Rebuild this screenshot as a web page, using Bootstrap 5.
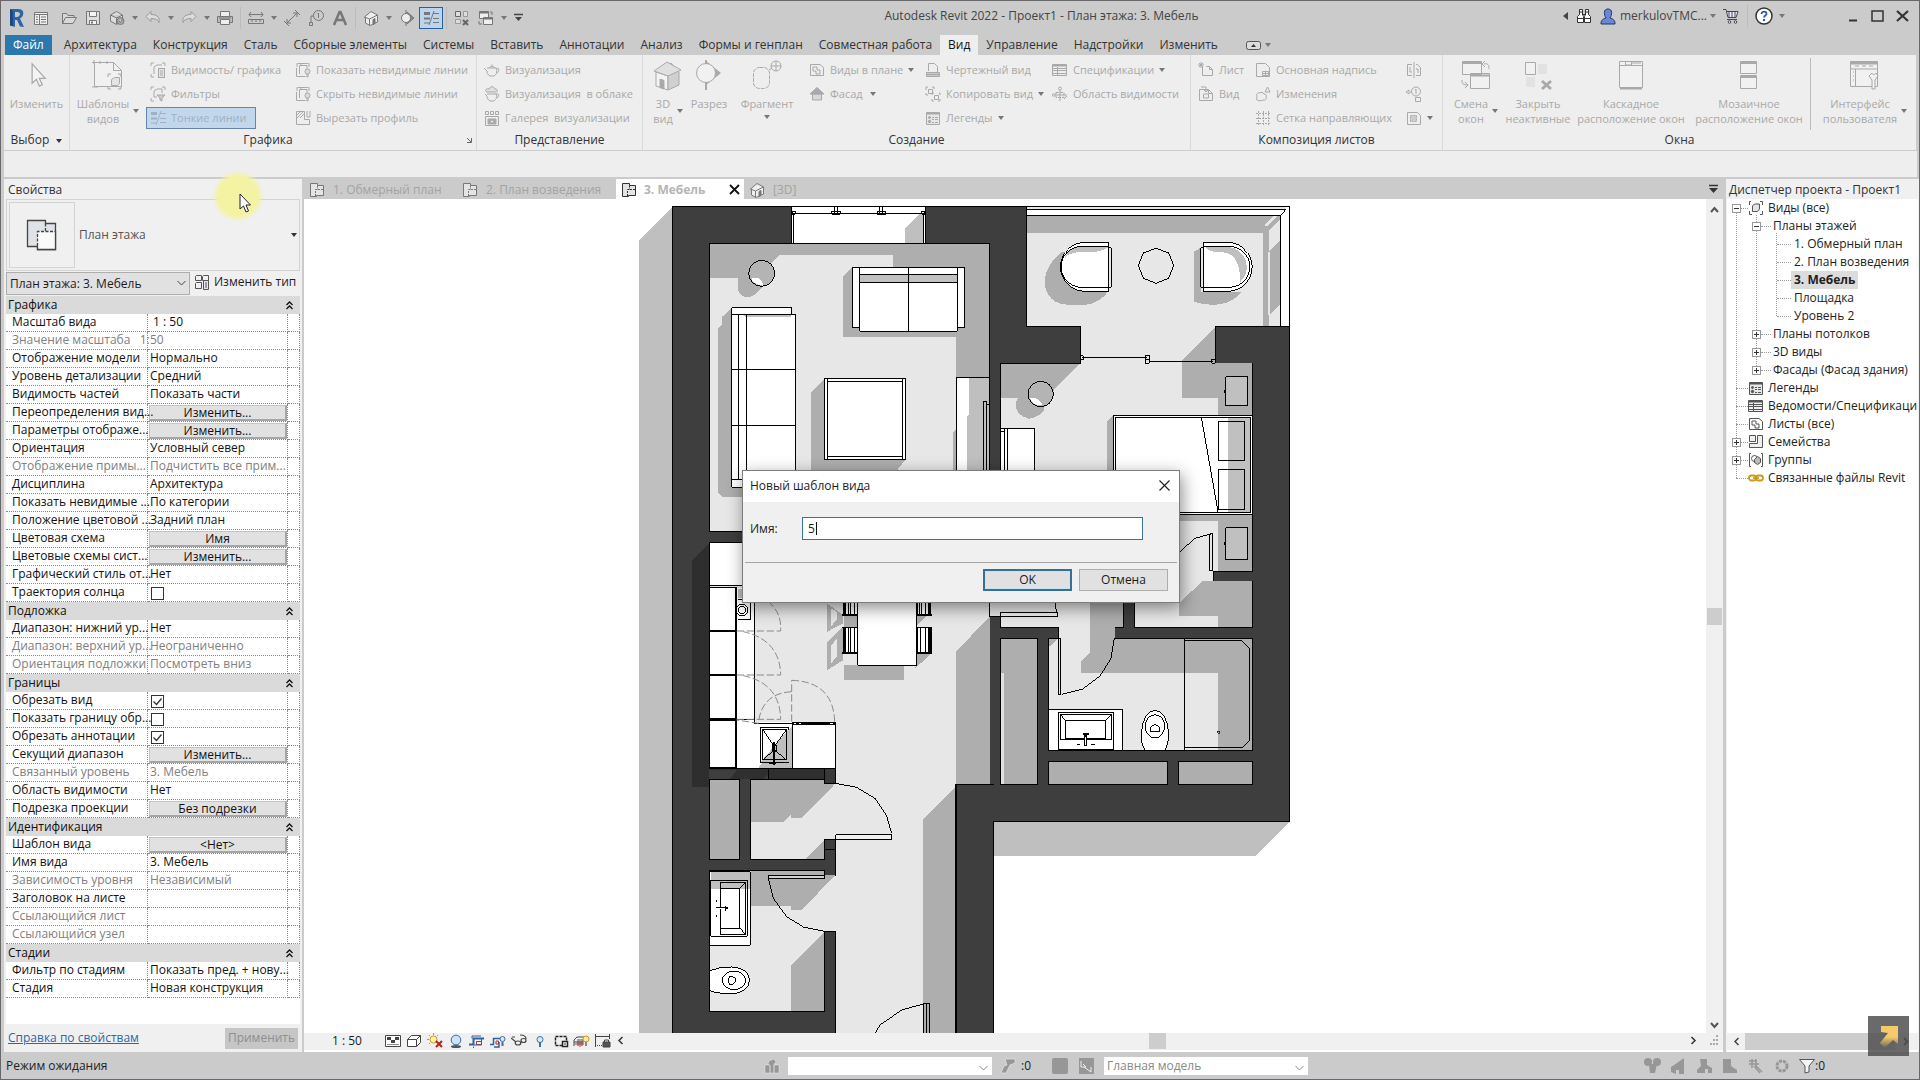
<!DOCTYPE html>
<html lang="ru">
<head>
<meta charset="utf-8">
<meta name="viewport" content="width=device-width, initial-scale=1">
<title>Autodesk Revit 2022 - Проект1 - План этажа: 3. Мебель</title>
<link href="https://cdn.jsdelivr.net/npm/bootstrap@5.3.0/dist/css/bootstrap.min.css" rel="stylesheet">
<style>
:root{--chrome:#cbcbcb;--panel:#eeeeee;--dim:#a9a9a9}
body{font:12px/18px "Open Sans","Noto Sans",sans-serif;color:#1c1c1c;background:var(--chrome);overflow:hidden}
button,select,input{font:inherit;color:inherit}
svg{display:block;flex:none}
.app-frame{border:1px solid #68686a;background:var(--chrome)}
.plain-btn{border:0;background:none;padding:0}
.title-row{height:34px}
.qa-btn{width:24px;height:22px;display:flex;align-items:center;justify-content:center;color:#777}
.qa-caret{width:12px;display:flex;justify-content:center;color:#555}
.qa-on{border:1px solid #2b5f9b;background:#bcd4ee}
.v-sep{width:1px;height:22px;margin:0 3px;background:#bcbcbc}
.app-title{color:#444}
.win-btn{width:25px;height:24px;display:flex;align-items:center;justify-content:center;color:#333}
.tab-row{height:20px;padding-left:4px}
.rb-tab{padding:0 8px;line-height:20px;color:#333;text-decoration:none;white-space:nowrap}
.rb-tab-file{background:#2b78ae;color:#fff;margin-right:4px}
.rb-tab-on{background:var(--panel);color:#111}
.ribbon{height:96px;margin:0 3px;background:var(--panel);border-bottom:1px solid #cdcdcd}
.rb-panel{border-right:1px solid #dadada}
.rb-body{height:75px;padding-top:3px;font-size:11px}
.rb-title{height:20px;line-height:20px;color:#333}
.rb-small{height:22px;margin:1px 0 2px;padding:0 3px;border:1px solid transparent;background:none;display:flex;align-items:center;gap:5px;color:var(--dim);white-space:nowrap;text-align:left}
.rb-small.is-on{border-color:#6585ad;background:#c3d7ec;color:#9fb0c4;padding-right:8px}
.rb-big{flex:none;border:0;background:none;padding:0;color:var(--dim);line-height:15px;display:flex;flex-direction:column;align-items:center;gap:5px;padding-top:2px;white-space:nowrap}
.caret-dn{border:3px solid transparent;border-top:4px solid #777;border-bottom:0;width:0;height:0;display:inline-block;flex:none}
.caret-dk{border-top-color:#333}
.options-bar{height:26px;margin:0 2px 0 3px;background:var(--panel)}
.work-row{border-top:2px solid var(--chrome);padding-left:3px;background:var(--chrome)}
.props{width:298px;background:#f0f0f0;padding:0 2px}
.pal-head{height:20px;line-height:22px;padding-left:2px;color:#333}
.type-box{height:72px;border:1px solid #d3d3d3;padding:2px}
.type-pic{width:66px;height:66px;border:1px solid #d3d3d3}
.sel-row{height:25px;padding-top:1px}
.inst-select{width:184px;height:23px;border:1px solid #adadad;background:#e1e1e1;padding:0 3px;appearance:none;border-radius:0}
.sel-wrap{position:relative}
.sel-wrap svg{position:absolute;right:4px;top:8px;pointer-events:none}
.props-table{width:294px;table-layout:fixed;border-collapse:separate;border-spacing:0;color:#111}
.props-table th,.props-table td{height:18px;padding:0;line-height:16px;font-weight:400;white-space:nowrap;border-bottom:1px dotted #8a8a8a;border-right:1px dotted #8a8a8a;vertical-align:top}
.props-table tbody th{padding-left:6px}
.props-table td{padding-left:2px}
.props-table .grp th{background:#dadada;border:0;padding:0 7px 0 2px;line-height:18px}
.props-table .off th,.props-table .off td{color:#808080}
.props-table .ctl{padding:1px 0 0 1px}
.cell-btn{display:block;width:138px;height:16px;padding:0;line-height:13px;border:1px solid #c4c4c4;border-right:2px solid #a5a5a5;border-bottom:2px solid #a5a5a5;background:#e1e1e1;text-align:center}
.tick{appearance:none;display:block;width:13px;height:13px;margin:2px 0 0 2px;border:1px solid #333;background:#fff}
.tick:checked{background:#fff url("data:image/svg+xml,%3Csvg xmlns='http://www.w3.org/2000/svg' viewBox='0 0 11 11'%3E%3Cpath d='M1.5 5.5l3 3 5-6' fill='none' stroke='%23333' stroke-width='1.3'/%3E%3C/svg%3E")}
.props-foot{height:28px;padding:0 2px}
.props-foot a{color:#2a68a8}
.apply-btn{width:73px;height:21px;border:0;background:#c6c6c6;color:#8f8f8f;padding:0;line-height:20px}
.canvas-col{margin-left:2px;min-width:0}
.doc-tabs{height:20px}
.doc-tab{border:0;background:none;height:20px;padding:1px 0 0 5px;display:flex;align-items:center;gap:8px;color:#a3a3a3;text-align:left;white-space:nowrap}
.doc-tab-on{background:#fff;font-weight:700;color:#b5b5b5;width:128px;padding-right:4px;gap:7px}
.canvas{background:#fff;min-height:0}
.plan-svg{width:0;flex:1 1 0;height:100%}
.vscroll{width:17px;background:#f0f0f0;color:#555}
.thumb-v{width:15px;height:17px;background:#cdcdcd}
.view-bar{height:19px;background:#f0f0f0;border-bottom:2px solid #fff;padding:0 0 2px 28px}
.vb-btn{width:21px;display:flex;justify-content:center}
.hthumb{width:17px;height:16px;background:#cdcdcd}
.browser-pal{width:193px;margin-left:3px;background:#f0f0f0;padding:0 1px}
.tree-box{background:#fff;overflow:hidden;min-height:0}
.tree-box ul{list-style:none;margin:0;padding:0;position:relative}
.tree-box ul::before{content:"";position:absolute;left:9px;top:9px;bottom:9px;border-left:1px dotted #9a9a9a}
.tree-box ul ul::before{left:29px;top:-2px}
.tree-box ul ul ul::before{left:49px}
.t-row{height:18px;display:flex;align-items:center;white-space:nowrap;padding-left:5px;position:relative;color:#222}
ul ul .t-row{padding-left:25px}
ul ul ul .t-row{padding-left:50px}
.t-exp{width:9px;height:9px;border:1px solid #989898;background:#fff;padding:0;position:relative;flex:none}
.t-exp::before{content:"";position:absolute;left:1px;right:1px;top:3px;height:1px;background:#333}
.t-exp.plus::after{content:"";position:absolute;top:1px;bottom:1px;left:3px;width:1px;background:#333}
.t-dots{width:7px;border-top:1px dotted #9a9a9a;flex:none}
.t-d10{width:10px;margin-right:2px}
.t-d12{width:12px;margin-left:4px}
.t-d14{width:14px}
.t-row svg{margin-right:4px}
.t-leaf{padding:0 3px}
.t-sel{background:#dcdcdc;font-weight:700}
.hs-row{height:19px;border-bottom:2px solid #fff;background:#f0f0f0;color:#444}
.hs-bar{height:17px;background:#cdcdcd}
.status-row{height:27px;background:var(--chrome);padding-left:5px;color:#222}
.st-select{height:18px;border:0;background:#fff;color:#888;appearance:none;padding:0 3px;width:204px;border-radius:0}
.st-icon{color:#979797}
.dlg{position:absolute;left:50%;top:469px;transform:translateX(-50%);width:438px;margin-left:1px;border:1px solid #7d7d7d;background:#f0f0f0;box-shadow:2px 5px 16px rgba(0,0,0,.45);z-index:5}
.dlg-head{height:31px;background:#fff;padding:0 7px 2px}
.dlg-body{padding:15px 36px 22px 7px}
.dlg-input{height:23px;border:1px solid #3b7398;background:linear-gradient(#111,#111) 13px 4px/1px 13px no-repeat #fff;padding:0 5px;border-radius:0;outline:0;caret-color:transparent}
.dlg-label{width:52px}
.dlg-foot{border-top:1px solid #a5a5a5;margin:0 2px;padding:6px 9px 11px;gap:7px}
.dlg-btn{width:89px;height:22px;border:1px solid #adadad;background:#e1e1e1;line-height:18px;padding:0}
.dlg-ok{border:2px solid #36709a;line-height:16px;box-shadow:inset 0 0 0 1px #c4e4f4}
.halo{position:absolute;left:211px;top:169px;width:52px;height:52px;border-radius:50%;background:radial-gradient(closest-side,#f4f3a3 75%,rgba(244,243,163,0));z-index:6}
.pointer{position:absolute;left:238px;top:192px;z-index:7}
.corner-mark{position:absolute;right:10px;bottom:23px;width:41px;height:40px;background:rgba(80,80,80,.85);z-index:6;display:flex;align-items:center;justify-content:center}
</style>
<script src="https://cdn.jsdelivr.net/npm/bootstrap@5.3.0/dist/js/bootstrap.bundle.min.js"></script>
</head>
<body>
<svg width="0" height="0" class="position-absolute" aria-hidden="true">
<defs>
<g id="sheetpair" fill="none" stroke="currentColor"><path d="M1.500 1.500h7v2h6v10h-7v1h-6z" fill="#e4e4e4"/><path d="M8.500 3.500v4M6.500 14v-6.500h8" stroke-dasharray="2 1"/></g>
<g id="house" stroke="currentColor" fill="#eee"><path d="M1.500 7L8 1.500 14.500 5v7L7 15.500l-4.500-2.500V8z"/><path d="M1.500 7l5 2 8-4M6.500 9v6" fill="none"/><path d="M10 9.500l2-1v5l-2 1z" fill="currentColor"/></g>
<g id="lines" fill="currentColor" stroke="none"><path d="M1 2h6v3H1zM1 7.500h6v2H1zM1 12.500h6v1H1zM10 3h6v1h-6zM10 8h6v1h-6zM10 12h6v1h-6z"/><path d="M6 15L11 1" stroke="currentColor" fill="none"/></g>
<g id="visgraph" fill="none" stroke="currentColor"><path d="M1 4V1h3M12 1h3v3M1 12v3h3" /><path d="M4 12V5l3-2h5"/><rect x="8.500" y="6.500" width="6" height="9" fill="#e4e4e4"/><path d="M10 9h3M10 11h3M10 13h3"/></g>
<g id="filt" fill="none" stroke="currentColor"><path d="M1 4V1h3M12 1h3v3M1 12v3h3M4 11V5l3-2h5v4M4 11h3"/><path d="M7 9h8l-3 3v3l-2-1v-2z" fill="#ccc"/></g>
<g id="hid" fill="none" stroke="currentColor"><path d="M4.500 12V3.500H12V12M1.500 6v8.500h9" /><path d="M2 1v4M6 1v2M14 1v4M3 1.500h10"/><circle cx="12.500" cy="9.500" r="2.500" fill="#ddd"/><path d="M12 12v3h1v-3"/></g>
<g id="cutp" fill="none" stroke="currentColor"><path d="M1.500 1.500h8v8h5v5h-13z"/><path d="M2 8l6-6M2 5l3-3M5 8l4-4M12 1v6h3V1"/></g>
<g id="teapot" fill="none" stroke="currentColor"><path d="M3 6h9c2 4 0 7-2 8H6C4 13 3 11 3 9L0 6M12 7c3-2 4 1 1 4M5 6c1-2 5-2 6 0M8 4V2.500"/></g>
<g id="teacloud" fill="none" stroke="currentColor"><path d="M3 8h9c2 3 0 5-2 7H6C4 14 3 12 3 10L1 8M12 8c4-1 3 3 1 4"/><path d="M3 6C0 5 2 2 5 3c1-3 5-3 6 0 3 0 3 3 1 3z" fill="#e0e0e0"/></g>
<g id="gall" fill="none" stroke="currentColor"><path d="M1.500 1.500h3v3h-3zM6.500 1.500h3v3h-3zM11.500 1.500h3v3h-3zM1.500 6.500h13v9h-13z"/><path d="M4 9h8v5H4z" fill="currentColor"/><circle cx="8" cy="11.500" r="1.500" fill="#eee"/></g>
<g id="planv" fill="none" stroke="currentColor"><path d="M1.500 2.500H11l3.500 3v8h-13z"/><path d="M4 5h4v3h3v4H7V9H4z"/></g>
<g id="facade" fill="#d8d8d8" stroke="currentColor"><path d="M3.500 8h9v6h-9z"/><path d="M8 1.500L15 8H1z" fill="currentColor"/></g>
<g id="draft" fill="none" stroke="currentColor"><path d="M3.500 9V1.500h6l3 3V10M1.500 10.500h13v4h-13z"/><path d="M2 12.500h12" stroke-width="2"/></g>
<g id="dup" fill="none" stroke="currentColor"><path d="M1 4V1h2M7 1h2v2M1 7v2h2M3.500 3.500h4v4h-4zM7 9V7h2M14 7h1v2M7 13v2h2M15 13v2h-2M9.500 9.500h4v4h-4z"/></g>
<g id="legend" fill="none" stroke="currentColor"><path d="M1.500 2.500h13v12h-13z" fill="#e8e8e8"/><path d="M2 3.500h12" stroke-width="2"/><circle cx="4.500" cy="7.500" r="1" fill="currentColor"/><circle cx="4.500" cy="11.500" r="1.200" fill="currentColor"/><path d="M7 7.500h2M10 7.500h3M7 9.500h2M10 9.500h3M7 12.500h2M10 12.500h3"/></g>
<g id="sched" fill="none" stroke="currentColor"><path d="M.5 2.500h14v11H.5z" fill="#eee"/><path d="M1 3.500h13" stroke-width="2"/><path d="M.5 6.500h14M.5 8.500h14M.5 11.500h14M5.500 5v9"/></g>
<g id="scope" fill="none" stroke="currentColor"><path d="M4 6.500h8v5H4z" stroke-dasharray="3 1"/><circle cx="8" cy="2.500" r="1.500"/><circle cx="1.800" cy="9" r="1.300"/><path d="M8 4v11M3 9h12M12 13l3-3"/></g>
<g id="sheetn" fill="none" stroke="currentColor"><path d="M4.500 4.500v9h10v-6l-3-3h-3M11.500 4.500v3h3"/><path d="M3 0v6M0 3h6M1 1l4 4M5 1L1 5"/></g>
<g id="sheetv" fill="none" stroke="currentColor"><path d="M1.500 3.500h9l4 4v7h-13zM10.500 3.500v4h4"/><path d="M3 1h5v4M6 4l2 2 2-2M5.500 8h5v4h-5z"/></g>
<g id="tblock" fill="none" stroke="currentColor"><path d="M1.500 1.500h9l4 4v9h-13z"/><path d="M7.500 9.500h6v4h-6zM7.500 11.500h6M10.500 9.500v4"/></g>
<g id="revis" fill="none" stroke="currentColor"><path d="M2 14c-1-2 0-2 0-4-1-2 1-4 3-3 1-1 3-1 4 1 2 0 3 2 2 3 1 2-1 4-3 3-2 1-4 1-6 0zM12.500 1l2.500 5h-5z"/></g>
<g id="guide" fill="none" stroke="currentColor" stroke-dasharray="2 1"><path d="M1 3.500h15M1 8.500h15M1 13.500h15M3.500 1v15M8.500 1v15M13.500 1v15"/></g>
<g id="matchl" fill="none" stroke="currentColor"><path d="M6 2.500H1.500v11H6M10 13.500h4.500v-8l-3-3H10M8 0v16M4 5v5h2M10 7h2v4"/></g>
<g id="vref" fill="none" stroke="currentColor"><circle cx="10" cy="5.500" r="4.500"/><path d="M9 4l1-1v5M0 6l3-2v4zM4 6h2M9.500 11.500h5v4h-5z"/></g>
<g id="vport" fill="none" stroke="currentColor"><path d="M1.500 2.500h10l3 3v9h-13z"/><path d="M4.500 5.500h6v6h-6z" fill="#ccc" stroke-dasharray="2 1"/></g>
<g id="shaft" fill="none" stroke="currentColor"><path d="M3 1.500H1.500V5M12 1.500h2.500V5M1.500 11v3.500H4M14.500 11v3.500H12"/><path d="M4.500 6l2-2h5v5l-2 2.500h-5z" fill="#e4e4e4"/></g>
</defs>
</svg>

<div class="app-frame vh-100 d-flex flex-column position-relative">
<header>
<div class="title-row d-flex align-items-center">
  <div class="d-flex align-items-center ps-1">
    <button class="plain-btn qa-btn" aria-label="Revit"><svg width="16" height="20" viewBox="0 0 16 20"><path d="M1 1h8c5 0 6 3 5 6-.5 2-2 3-3 3.500L15 19l-4-.5L8 12H6v7l-5-1.500z" fill="#2d66a8"/><path d="M6 4h2.500c2 0 2.500 1 2.300 2.500C10.500 8 9.500 9 8 9H6z" fill="#cbcbcb"/><path d="M1 1l3 2v15l-3-.5z" fill="#1a4a85"/></svg></button>
    <button class="plain-btn qa-btn me-1" aria-label="Главная"><svg width="16" height="16" fill="none" stroke="currentColor"><path d="M1.500 2.500h13v12h-13z" fill="#eee"/><path d="M1.500 4.500h13M6.500 4v10M2 2.500h12M3 7h2M3 9.500h2M3 12h2M8 7h5M8 9.500h5M8 12h5" /></svg></button>
    <button class="plain-btn qa-btn" aria-label="Открыть"><svg width="16" height="16" fill="#d8d8d8" stroke="currentColor"><path d="M1.500 13.500v-10h4l1.500 2h6v2M1.500 13.500l3-6h11l-3.500 6z"/></svg></button>
    <button class="plain-btn qa-btn" aria-label="Сохранить"><svg width="16" height="16" fill="#ddd" stroke="currentColor"><path d="M1.500 1.500h13v13h-13z"/><path d="M4.500 1.500h7v5h-7zM4.500 10.500h7v4h-7z" fill="#f4f4f4"/><path d="M6 12.500h2" stroke-width="2"/></svg></button>
    <button class="plain-btn qa-btn" aria-label="Синхронизация"><svg width="16" height="16" fill="#ddd" stroke="currentColor"><path d="M1.500 5l6-3.500 6 3.500v6l-6 3.500-6-3.500zM1.500 5l6 3 6-3M7.500 8v6"/><circle cx="11.500" cy="11" r="3.500" fill="#aaa"/><path d="M10 11l1.500 1.500L13.500 9"/></svg></button>
    <span class="qa-caret"><i class="caret-dn"></i></span>
    <button class="plain-btn qa-btn" aria-label="Отменить"><svg width="16" height="16" fill="#ddd" stroke="#999"><path d="M1 6.500l5-5v3c5 0 9 2 8 8-1-3-4-4-8-4v3z"/></svg></button>
    <span class="qa-caret"><i class="caret-dn"></i></span>
    <button class="plain-btn qa-btn" aria-label="Повторить"><svg width="16" height="16" fill="#ddd" stroke="#999"><path d="M15 6.500l-5-5v3c-5 0-9 2-8 8 1-3 4-4 8-4v3z"/></svg></button>
    <span class="qa-caret"><i class="caret-dn"></i></span>
    <button class="plain-btn qa-btn" aria-label="Печать"><svg width="16" height="16" fill="#eee" stroke="currentColor"><path d="M3.500 6V1.500h9V6"/><path d="M.5 6.500h15v6H.5z" fill="#bbb"/><path d="M3.500 9.500h9v5h-9z"/><path d="M2 8h12"/></svg></button>
    <span class="v-sep"></span>
    <button class="plain-btn qa-btn" aria-label="Измерить"><svg width="16" height="16" fill="none" stroke="currentColor"><path d="M1 4.500h14M3 2l-2 2.500L3 7M13 2l2 2.500L13 7M.5 9.500h15v4H.5zM4 10v2M8 10v2M12 10v2"/></svg></button>
    <span class="qa-caret"><i class="caret-dn"></i></span>
    <button class="plain-btn qa-btn" aria-label="Размер"><svg width="16" height="16" fill="none" stroke="currentColor"><path d="M3 13L13 3M3 9v4h4M9 3h4v4M0 11l5 5M11 0l5 5"/></svg></button>
    <button class="plain-btn qa-btn" aria-label="Марка"><svg width="16" height="16" fill="none" stroke="currentColor"><circle cx="10.500" cy="5.500" r="5"/><path d="M9.500 4l1-1v5M6 6H3v6M1.500 12.500h3v3h-3z"/></svg></button>
    <button class="plain-btn qa-btn" aria-label="Текст"><svg width="16" height="16" fill="none" stroke="currentColor" stroke-width="2.500"><path d="M2 15L7.500 2h1L14 15M4.500 10h7"/></svg></button>
    <span class="v-sep"></span>
    <button class="plain-btn qa-btn" aria-label="3D"><svg width="16" height="16"><use href="#house"/></svg></button>
    <span class="qa-caret"><i class="caret-dn"></i></span>
    <button class="plain-btn qa-btn" aria-label="Разрез"><svg width="16" height="16" fill="#eee" stroke="currentColor"><path d="M8 2l7 6-7 6z" fill="#888"/><circle cx="7" cy="8" r="4.500"/><path d="M7 0v3M7 13v3"/></svg></button>
    <button class="plain-btn qa-btn qa-on" aria-label="Тонкие линии"><svg width="16" height="16"><use href="#lines"/></svg></button>
    <span class="v-sep"></span>
    <button class="plain-btn qa-btn" aria-label="Закрыть неактивные"><svg width="16" height="16" fill="#ddd" stroke="#999"><path d="M1.500 1.500h5v5h-5z" stroke="#666"/><path d="M9.500 1.500h4v5h-4zM1.500 9.500h5v4h-5z"/><path d="M9 10l5 5M14 10l-5 5" stroke="#666" stroke-width="2"/></svg></button>
    <button class="plain-btn qa-btn" aria-label="Сменить окно"><svg width="16" height="16" fill="#eee" stroke="currentColor"><path d="M1.500 1.500h9v7h-9zM5.500 7.500h9v7h-9z"/><path d="M5.500 8.500h9M1.500 2.500h9" stroke-width="2"/><path d="M12 2h2v3M1 11v3h3" fill="none"/></svg></button>
    <span class="qa-caret"><i class="caret-dn"></i></span>
    <button class="plain-btn ms-1" aria-label="Настройка панели"><svg width="9" height="10"><path d="M0 1.500h9" stroke="#444" stroke-width="1.500"/><path d="M1 4h7L4.500 8z" fill="#444"/></svg></button>
  </div>
  <div class="app-title flex-grow-1 text-center pb-1">Autodesk Revit 2022 - Проект1 - План этажа: 3. Мебель</div>
  <div class="d-flex align-items-center pe-1 pb-1">
    <span class="qa-caret"><svg width="5" height="8"><path d="M5 0v8L0 4z" fill="#444"/></svg></span>
    <button class="plain-btn qa-btn" aria-label="Поиск"><svg width="16" height="16" fill="#fff" stroke="#333"><path d="M3.500 1.500h3v5l1 2v6h-6v-6l2-2zM9.500 1.500h3v5l2 2v6h-6v-6l1-2z"/><path d="M1.500 10.500h6M8.500 10.500h6M6 6.500h4M3.500 4h3M9.500 4h3"/></svg></button>
    <button class="plain-btn app-title d-flex align-items-center gap-1 ms-1"><svg width="16" height="17"><path d="M8 1c5 0 4 6 2 9 4 1 5 3 5 6H1c0-3 1-5 5-6C4 7 3 1 8 1z" fill="#6b86d6" stroke="#25355f"/></svg>merkulovTMC...</button>
    <span class="qa-caret"><i class="caret-dn"></i></span>
    <button class="plain-btn qa-btn" aria-label="Магазин"><svg width="16" height="16" fill="#eef" stroke="#445"><path d="M0 1.500h3l2 8h8l2-6H4"/><path d="M6 3v6M9 3v6M12 3v6M4 11.500h10" /><circle cx="6.500" cy="14" r="1.300"/><circle cx="12.500" cy="14" r="1.300"/></svg></button>
    <span class="v-sep mx-1"></span>
    <button class="plain-btn qa-btn" aria-label="Справка"><svg width="18" height="18"><circle cx="9" cy="9" r="8" fill="#fff" stroke="#333" stroke-width="1.500"/><path d="M6.500 7c0-3.500 5.500-3 5 0-.3 1.500-2.500 1.500-2.500 3.500" fill="none" stroke="#2d5aa8" stroke-width="1.800"/><circle cx="9" cy="13" r="1.200" fill="#2d5aa8"/></svg></button>
    <span class="qa-caret me-5"><i class="caret-dn"></i></span>
    <button class="plain-btn win-btn ms-1" aria-label="Свернуть"><svg width="12" height="12"><path d="M2 10.500h8" stroke="currentColor" stroke-width="2"/></svg></button>
    <button class="plain-btn win-btn" aria-label="Развернуть"><svg width="13" height="12"><path d="M1 1h11v10H1z" fill="none" stroke="currentColor" stroke-width="1.500"/></svg></button>
    <button class="plain-btn win-btn" aria-label="Закрыть"><svg width="13" height="12"><path d="M1 1l11 10M12 1L1 11" stroke="currentColor" stroke-width="2.200"/></svg></button>
  </div>
</div>
<nav class="tab-row d-flex" aria-label="Лента">
  <a href="#" class="rb-tab rb-tab-file">Файл</a><a href="#" class="rb-tab">Архитектура</a><a href="#" class="rb-tab">Конструкция</a><a href="#" class="rb-tab">Сталь</a><a href="#" class="rb-tab">Сборные элементы</a><a href="#" class="rb-tab">Системы</a><a href="#" class="rb-tab">Вставить</a><a href="#" class="rb-tab">Аннотации</a><a href="#" class="rb-tab">Анализ</a><a href="#" class="rb-tab">Формы и генплан</a><a href="#" class="rb-tab">Совместная работа</a><a href="#" class="rb-tab rb-tab-on">Вид</a><a href="#" class="rb-tab">Управление</a><a href="#" class="rb-tab">Надстройки</a><a href="#" class="rb-tab">Изменить</a>
  <button class="plain-btn d-flex align-items-center ms-3 ps-1 gap-1" aria-label="Свернуть ленту"><svg width="15" height="9"><rect x=".5" y=".5" width="14" height="8" rx="2" fill="#ddd" stroke="#555"/><path d="M5 6l2.500-3L10 6z" fill="#333"/></svg><i class="caret-dn"></i></button>
</nav>
<div class="ribbon d-flex">
  <section class="rb-panel d-flex flex-column" style="width:66px">
    <div class="rb-body d-flex justify-content-center"><button class="rb-big"><svg width="32" height="31" viewBox="0 0 32 32"><path d="M12 4v20l4.500-4 3 7 3-1.500-3-6.500h6z" fill="#f4f4f4" stroke="#a9a9a9" stroke-width="1.300"/></svg>Изменить</button></div>
    <div class="rb-title text-center">Выбор <i class="caret-dn caret-dk ms-1 align-middle"></i></div>
  </section>
  <section class="rb-panel d-flex flex-column" style="width:407px">
    <div class="rb-body d-flex">
      <button class="rb-big" style="width:76px"><svg width="34" height="31" fill="none" stroke="#a9a9a9"><path d="M3.500 2.500h19l8 8v16h-27z" fill="#f1f1f1"/><path d="M3 0v4M9 1v3M16 1v3M22.500 2.500v8h8M1 2.500h4M1 27h6"/><path d="M17 17v-3h3M27 14h3v3M17 26v3h3M30 26v3h-3M20.500 19.500l3-2h5v6l-2 2h-6z" fill="#e4e4e4"/></svg><span class="d-flex align-items-center gap-1"><span>Шаблоны<br>видов</span><i class="caret-dn"></i></span></button>
      <div style="width:145px"><button class="rb-small"><svg width="16" height="16"><use href="#visgraph"/></svg>Видимость/ графика</button><button class="rb-small"><svg width="16" height="16"><use href="#filt"/></svg>Фильтры</button><button class="rb-small is-on"><svg width="16" height="16"><use href="#lines"/></svg>Тонкие линии</button></div>
      <div><button class="rb-small"><svg width="16" height="16"><use href="#hid"/></svg>Показать невидимые линии</button><button class="rb-small"><svg width="16" height="16"><use href="#hid"/></svg>Скрыть невидимые линии</button><button class="rb-small"><svg width="16" height="16"><use href="#cutp"/></svg>Вырезать профиль</button></div>
    </div>
    <div class="rb-title d-flex align-items-center"><span class="flex-grow-1 text-center">Графика</span><svg width="6" height="6" class="me-1" fill="none" stroke="#666"><path d="M1 1l4 4M5.500 1v4.500H1"/></svg></div>
  </section>
  <section class="rb-panel d-flex flex-column" style="width:166px">
    <div class="rb-body" style="padding-left:3px"><button class="rb-small"><svg width="16" height="16"><use href="#teapot"/></svg>Визуализация</button><button class="rb-small"><svg width="16" height="16"><use href="#teacloud"/></svg>Визуализация&nbsp; в облаке</button><button class="rb-small"><svg width="16" height="16"><use href="#gall"/></svg>Галерея&nbsp; визуализации</button></div>
    <div class="rb-title text-center">Представление</div>
  </section>
  <section class="rb-panel d-flex flex-column" style="width:548px">
    <div class="rb-body d-flex" style="padding-left:4px">
      <button class="rb-big" style="width:42px"><svg width="30" height="31" viewBox="0 0 30 31" fill="#e0e0e0" stroke="#a9a9a9"><path d="M3 12v14l12 4V16z" fill="#f4f4f4"/><path d="M15 16v14l11-5V12L18 3z" fill="#d0d0d0"/><path d="M1 11L14 2l14 8-13 6z"/><path d="M7 19l4 1.500V29l-4-1.500z" fill="#a9a9a9"/></svg><span class="d-flex align-items-center gap-1"><span>3D<br>вид</span><i class="caret-dn"></i></span></button>
      <button class="rb-big" style="width:40px"><svg width="28" height="31"><path d="M11 1l15 12-15 12z" fill="#a9a9a9"/><circle cx="11" cy="13" r="9.500" fill="#f1f1f1" stroke="#a9a9a9"/><path d="M11 0v4M11 22v8" stroke="#a9a9a9" stroke-width="2"/></svg>Разрез</button>
      <button class="rb-big" style="width:76px"><svg width="30" height="31" fill="none" stroke="#a9a9a9"><rect x="1.500" y="7.500" width="16" height="21" rx="6" stroke-dasharray="4 1"/><circle cx="24" cy="6" r="5"/><path d="M19 6h10M24 1v10M17 10l3-2"/></svg><span class="d-flex flex-column align-items-center">Фрагмент<i class="caret-dn mt-1"></i></span></button>
      <div style="width:116px"><button class="rb-small"><svg width="16" height="16"><use href="#planv"/></svg>Виды в плане<i class="caret-dn"></i></button><button class="rb-small"><svg width="16" height="16"><use href="#facade"/></svg>Фасад&nbsp;<i class="caret-dn"></i></button></div>
      <div style="width:127px"><button class="rb-small"><svg width="16" height="16"><use href="#draft"/></svg>Чертежный вид</button><button class="rb-small"><svg width="16" height="16"><use href="#dup"/></svg>Копировать вид<i class="caret-dn"></i></button><button class="rb-small"><svg width="16" height="16"><use href="#legend"/></svg>Легенды<i class="caret-dn"></i></button></div>
      <div><button class="rb-small"><svg width="16" height="16"><use href="#sched"/></svg>Спецификации<i class="caret-dn"></i></button><button class="rb-small"><svg width="16" height="16"><use href="#scope"/></svg>Область видимости</button></div>
    </div>
    <div class="rb-title text-center">Создание</div>
  </section>
  <section class="rb-panel d-flex flex-column" style="width:252px">
    <div class="rb-body d-flex" style="padding-left:3px">
      <div style="width:57px"><button class="rb-small"><svg width="16" height="16"><use href="#sheetn"/></svg>Лист</button><button class="rb-small"><svg width="16" height="16"><use href="#sheetv"/></svg>Вид</button></div>
      <div style="width:151px"><button class="rb-small"><svg width="16" height="16"><use href="#tblock"/></svg>Основная надпись</button><button class="rb-small"><svg width="16" height="16"><use href="#revis"/></svg>Изменения</button><button class="rb-small"><svg width="16" height="16"><use href="#guide"/></svg>Сетка направляющих</button></div>
      <div><button class="rb-small" aria-label="Линия совпадения"><svg width="16" height="16"><use href="#matchl"/></svg></button><button class="rb-small" aria-label="Ссылка на вид"><svg width="16" height="16"><use href="#vref"/></svg></button><button class="rb-small" aria-label="Видовые экраны"><svg width="16" height="16"><use href="#vport"/></svg><i class="caret-dn"></i></button></div>
    </div>
    <div class="rb-title text-center">Композиция листов</div>
  </section>
  <section class="d-flex flex-column flex-grow-1">
    <div class="rb-body d-flex" style="padding-left:4px">
      <button class="rb-big" style="width:58px"><svg width="30" height="31" fill="#f1f1f1" stroke="#a9a9a9"><path d="M1.500 1.500h19v13h-19zM9.500 13.500h19v15h-19z"/><path d="M1 3h20M9 15.500h20" stroke-width="2"/><path d="M23 4c4-1 5 1 5 5M1 20c0 4 1 5 6 5M4 22l3 3-3 3M24 1l-3 3 3 3" fill="none"/></svg><span class="d-flex align-items-center gap-1"><span>Смена<br>окон</span><i class="caret-dn"></i></span></button>
      <button class="rb-big" style="width:66px"><svg width="28" height="31" fill="#f1f1f1" stroke="#a9a9a9"><path d="M1.500 2.500h10v12h-10z"/><path d="M14 4h9v10h-9zM2 17h9v10H2z" fill="#e2e2e2" stroke="none"/><path d="M18 21l9 8M27 21l-9 8" stroke-width="3"/></svg>Закрыть<br>неактивные</button>
      <button class="rb-big" style="width:120px"><svg width="26" height="31" fill="#f1f1f1" stroke="#a9a9a9"><path d="M1.500 1.500h23v26h-23z"/><path d="M1.500 5.500h23M7.500 2v3h6V2M13 3h10"/><path d="M2 28.500h22" stroke-width="2"/></svg>Каскадное<br>расположение окон</button>
      <button class="rb-big" style="width:116px"><svg width="18" height="31" fill="#f1f1f1" stroke="#a9a9a9"><path d="M.5 1.500h16v12H.5zM.5 15.500h16v13H.5z"/><path d="M0 3h17M0 17h17" stroke-width="2"/></svg>Мозаичное<br>расположение окон</button>
      <span class="v-sep h-100"></span>
      <button class="rb-big flex-grow-1"><svg width="32" height="31" fill="#f1f1f1" stroke="#a9a9a9"><path d="M1.500 1.500h27v25h-27z"/><path d="M1 3h28" stroke-width="3"/><path d="M2 9h27M6.500 9v17M4 12h1M4 16h1M4 20h1M6 6h4M13 6h4M20 6h4"/><path d="M23 13c0 2 3 2 4 0l2 3-3 4v9h-3v-9l-3-4z"/></svg><span class="d-flex align-items-center gap-1"><span>Интерфейс<br>пользователя</span><i class="caret-dn"></i></span></button>
    </div>
    <div class="rb-title text-center">Окна</div>
  </section>
</div>
<div class="options-bar"></div>
</header>

<main class="work-row d-flex flex-grow-1" style="min-height:0">
<aside class="props d-flex flex-column flex-shrink-0">
  <div class="pal-head">Свойства</div>
  <div class="type-box d-flex align-items-center">
    <div class="type-pic d-flex align-items-center justify-content-center"><svg width="32" height="32" fill="none" stroke="#444" stroke-width="1.300"><path d="M1.500 1.500h18v3h10v26h-18v-3h-10z" fill="#dfe3e8"/><path d="M12 12.500h17v17.500H12z" fill="#fafafa" stroke="none"/><path d="M19.500 4.500v8M11.500 27v-14.500h18" stroke-dasharray="3 1.500"/><path d="M29.500 12v18.500h-18v-3"/></svg></div>
    <span class="flex-grow-1 ps-1" style="color:#555">План этажа</span><i class="caret-dn caret-dk"></i>
  </div>
  <div class="sel-row d-flex align-items-start">
    <div class="sel-wrap"><select class="inst-select" aria-label="Экземпляр"><option>План этажа: 3. Мебель</option></select><svg width="9" height="7" fill="none" stroke="#444"><path d="M.5 1l4 4 4-4"/></svg></div>
    <button class="plain-btn d-flex align-items-center gap-1 ms-1" style="height:20px"><svg width="16" height="16" fill="none" stroke="#555"><path d="M2.500 1.500h5v5h-6v-4zM9.500 1.500h5v5h-6v-4zM2.500 8.500h5v6h-6v-5z"/><path d="M9.500 6.500h5v9h-5z" fill="#dfe8f4"/><path d="M11 9h2M11 11h2M11 13h2"/></svg>Изменить тип</button>
  </div>
  <div class="flex-grow-1 bg-white" style="overflow:hidden;min-height:0">
  <table class="props-table">
    <colgroup><col style="width:142px"><col style="width:140px"><col></colgroup>
    <tbody>
    <tr class="grp"><th colspan="3"><div class="d-flex justify-content-between align-items-center">Графика<svg width="7" height="9" fill="none" stroke="#111" stroke-width="1.300"><path d="M.5 4l3-3 3 3M.5 8l3-3 3 3"/></svg></div></th></tr>
    <tr><th>Масштаб вида</th><td>&nbsp;1 : 50</td><td></td></tr>
    <tr class="off"><th>Значение масштаба &nbsp; 1:</th><td>50</td><td></td></tr>
    <tr><th>Отображение модели</th><td>Нормально</td><td></td></tr>
    <tr><th>Уровень детализации</th><td>Средний</td><td></td></tr>
    <tr><th>Видимость частей</th><td>Показать части</td><td></td></tr>
    <tr><th>Переопределения вид...</th><td class="ctl"><button class="cell-btn">Изменить...</button></td><td></td></tr>
    <tr><th>Параметры отображе...</th><td class="ctl"><button class="cell-btn">Изменить...</button></td><td></td></tr>
    <tr><th>Ориентация</th><td>Условный север</td><td></td></tr>
    <tr class="off"><th>Отображение примы...</th><td>Подчистить все прим...</td><td></td></tr>
    <tr><th>Дисциплина</th><td>Архитектура</td><td></td></tr>
    <tr><th>Показать невидимые ...</th><td>По категории</td><td></td></tr>
    <tr><th>Положение цветовой ...</th><td>Задний план</td><td></td></tr>
    <tr><th>Цветовая схема</th><td class="ctl"><button class="cell-btn">Имя</button></td><td></td></tr>
    <tr><th>Цветовые схемы сист...</th><td class="ctl"><button class="cell-btn">Изменить...</button></td><td></td></tr>
    <tr><th>Графический стиль от...</th><td>Нет</td><td></td></tr>
    <tr><th><label for="sun">Траектория солнца</label></th><td class="ctl"><input type="checkbox" class="tick" id="sun"></td><td></td></tr>
    <tr class="grp"><th colspan="3"><div class="d-flex justify-content-between align-items-center">Подложка<svg width="7" height="9" fill="none" stroke="#111" stroke-width="1.300"><path d="M.5 4l3-3 3 3M.5 8l3-3 3 3"/></svg></div></th></tr>
    <tr><th>Диапазон: нижний ур...</th><td>Нет</td><td></td></tr>
    <tr class="off"><th>Диапазон: верхний ур...</th><td>Неограниченно</td><td></td></tr>
    <tr class="off"><th>Ориентация подложки</th><td>Посмотреть вниз</td><td></td></tr>
    <tr class="grp"><th colspan="3"><div class="d-flex justify-content-between align-items-center">Границы<svg width="7" height="9" fill="none" stroke="#111" stroke-width="1.300"><path d="M.5 4l3-3 3 3M.5 8l3-3 3 3"/></svg></div></th></tr>
    <tr><th><label for="crop">Обрезать вид</label></th><td class="ctl"><input type="checkbox" class="tick" id="crop" checked></td><td></td></tr>
    <tr><th><label for="cropb">Показать границу обр...</label></th><td class="ctl"><input type="checkbox" class="tick" id="cropb"></td><td></td></tr>
    <tr><th><label for="cropa">Обрезать аннотации</label></th><td class="ctl"><input type="checkbox" class="tick" id="cropa" checked></td><td></td></tr>
    <tr><th>Секущий диапазон</th><td class="ctl"><button class="cell-btn">Изменить...</button></td><td></td></tr>
    <tr class="off"><th>Связанный уровень</th><td>3. Мебель</td><td></td></tr>
    <tr><th>Область видимости</th><td>Нет</td><td></td></tr>
    <tr><th>Подрезка проекции</th><td class="ctl"><button class="cell-btn">Без подрезки</button></td><td></td></tr>
    <tr class="grp"><th colspan="3"><div class="d-flex justify-content-between align-items-center">Идентификация<svg width="7" height="9" fill="none" stroke="#111" stroke-width="1.300"><path d="M.5 4l3-3 3 3M.5 8l3-3 3 3"/></svg></div></th></tr>
    <tr><th>Шаблон вида</th><td class="ctl"><button class="cell-btn">&lt;Нет&gt;</button></td><td></td></tr>
    <tr><th>Имя вида</th><td>3. Мебель</td><td></td></tr>
    <tr class="off"><th>Зависимость уровня</th><td>Независимый</td><td></td></tr>
    <tr><th>Заголовок на листе</th><td></td><td></td></tr>
    <tr class="off"><th>Ссылающийся лист</th><td></td><td></td></tr>
    <tr class="off"><th>Ссылающийся узел</th><td></td><td></td></tr>
    <tr class="grp"><th colspan="3"><div class="d-flex justify-content-between align-items-center">Стадии<svg width="7" height="9" fill="none" stroke="#111" stroke-width="1.300"><path d="M.5 4l3-3 3 3M.5 8l3-3 3 3"/></svg></div></th></tr>
    <tr><th>Фильтр по стадиям</th><td>Показать пред. + нову...</td><td></td></tr>
    <tr><th>Стадия</th><td>Новая конструкция</td><td></td></tr>
    </tbody>
  </table>
  </div>
  <div class="props-foot d-flex justify-content-between align-items-center"><a href="#">Справка по свойствам</a><button class="apply-btn">Применить</button></div>
</aside>

<section class="canvas-col d-flex flex-column flex-grow-1">
  <div class="doc-tabs d-flex">
    <button class="doc-tab" style="width:153px"><svg width="16" height="16" style="color:#777"><use href="#sheetpair"/></svg>1. Обмерный план</button>
    <button class="doc-tab" style="width:159px"><svg width="16" height="16" style="color:#777"><use href="#sheetpair"/></svg>2. План возведения</button>
    <div class="doc-tab doc-tab-on"><svg width="16" height="16" style="color:#333"><use href="#sheetpair"/></svg>3. Мебель<button class="plain-btn ms-auto" aria-label="Закрыть вид"><svg width="11" height="11"><path d="M1 1l9 9M10 1l-9 9" stroke="#111" stroke-width="1.800"/></svg></button></div>
    <button class="doc-tab"><svg width="16" height="16" style="color:#777"><use href="#house"/></svg>[3D]</button>
    <button class="plain-btn ms-auto me-1 pe-0" aria-label="Список видов"><svg width="11" height="10"><path d="M1 1.500h9" stroke="#333" stroke-width="1.500"/><path d="M1 4h9L5.500 9z" fill="#333"/></svg></button>
  </div>
  <div class="canvas d-flex flex-grow-1">
  <svg class="plan-svg" role="img" aria-label="План этажа" fill="none" stroke="none" shape-rendering="crispEdges">
  <g transform="translate(-304 -199)">
    <path d="M672 207L639 241V1033H672zM994 821H1290L1256 856H994z" fill="#bfbfbf"/>
    <path d="M672.500 1034V206.500H1289.500V821.500H993.500V1034" fill="#3e3e3e" stroke="#000"/>
    <!-- floors -->
    <path d="M709.500 243.500H989.500V616.500H1000.500V627.500H1058.500V638.500H1048.500V750.500H1252.500V638.500H1114.500V627.500H1123.500V560H1134.500V627.500H1252.500V581.500H1213.500V571.500H1252.500V363.500H1215.500V326.500H1289.500V206.500H1026.500V326.500H1080.500V363.500H1000.500V590H989.500V784.500H956.500V1034H835.500V931.500H824.500V1011.500H709.500V870.500H824.500V875.500H835.500V839.500H824.500V859.500H750.500V779.500H824.500V783.500H835.500V768.500H709.500V542.500H742V531.500H709.500z" fill="#e7e7e7" stroke="#000"/>
    <path d="M989.500 590H1000.500V616H989.500z" fill="#e7e7e7"/>
    <path d="M709.500 779.500h30v80h-30zM1000.500 638.500h37v146h-37zM1048.500 761.500h119v23h-119zM1178.500 761.500h74v23h-74z" fill="#aeaeae" stroke="#000"/>
    <path d="M1001 673h3v111h-3z" fill="#e0e0e0"/>
  </g>
  <!-- living room -->
  <g transform="translate(326 -4) scale(.33333)" stroke-width="3">
    <path d="M485 34H888V145H485z" fill="#fff" stroke="#000"/>
    <path d="M825 100L870 57H881V143H825z" fill="#bfbfbf"/>
    <path d="M490 55V145M881 55V145M490 55H881M613 36V55M622 36V55M749 36V55M758 36V55M606 49h25v9h-25zM742 49h25v9h-25zM487 49h9v9h-9zM875 49h9v9h-9z" stroke="#000"/>
    <path d="M241 147H1077V547H978V427H640V245L667 217H789V180H450L415 215 434 240 385 290Q365 312 340 304 320 290 323 270V248H241z" fill="#aeaeae"/>
    <circle cx="395" cy="235" r="39" fill="#b4b4b4" stroke="#000"/><path d="M366 250Q385 245 396 258L400 272Q378 270 366 258z" fill="#fff"/>
    <path d="M689 217H982V238H689zM667 217H689V398H667zM982 217H1003V398H982zM689 262H982V409H689z" fill="#fff" stroke="#000"/><path d="M689 238H982V262H689z" fill="#c0c0c0" stroke="#000"/><path d="M835 217V409" stroke="#000"/>
    <path d="M304 340L277 365V388L265 400V895L277 906H345V340z" fill="#aeaeae"/>
    <path d="M305 338H485V358H305zM305 358H496V877H305z" fill="#fff" stroke="#000"/><path d="M340 360H484V366H346z" fill="#c0c0c0"/><path d="M326 358V853M349 358V853M305 523H496M305 691H496M305 853H496" stroke="#000"/>
    <path d="M583 552L544 592V840H790L827 793z" fill="#aeaeae"/><path d="M583 550H827V793H583z" fill="#fff" stroke="#000"/><path d="M592 550V793M818 550V793M592 559H818M592 784H818" stroke="#000"/>
    <path d="M970 712L979 703V860H970z" fill="#aeaeae"/><path d="M979 547H1078V860H979z" fill="#fff" stroke="#000"/><path d="M1016 549H1077V860H1010V665L1016 660z" fill="#bfbfbf"/><path d="M1060 860V619H1069V860M1069 628H1077" stroke="#000"/>
  </g>
  <!-- balcony and bedroom -->
  <g transform="translate(676 -4) scale(.33333)" stroke-width="3">
    <path d="M142 43H918V35H928V393H902V61H142z" fill="#fff"/>
    <path d="M141 63H900V393H849V113H141z" fill="#aeaeae"/>
    <path d="M868 105L900 75V137L868 170zM868 360L900 328V393H868zM854 90L880 63H892L862 95zM864 170h5v190h-5z" fill="#e7e7e7"/>
    <path d="M140 43H918M140 61H902V394M902 61L918 43M928 35V394" stroke="#000"/>
    <g><path d="M245 170Q192 215 194 270 205 325 260 329H320Q355 325 385 290V200z" fill="#aeaeae"/>
    <path d="M386 142H315A73 73 0 0 0 315 289H386z" fill="#fff" stroke="#000"/><path d="M387 156Q360 175 310 170 275 172 256 185 268 154 312 154z" fill="#bfbfbf"/><path d="M387 154H312A62 61 0 0 0 300 277H394V158H387z" stroke="#000"/>
    <path d="M642 170L662 158V290H785Q755 329 700 329 665 329 642 320z" fill="#aeaeae"/>
    <path d="M670 142H743A73 73 0 0 1 743 289H670z" fill="#fff" stroke="#000"/><path d="M676 156H748A60 61 0 0 1 780 262Q782 170 720 172 690 172 676 156z" fill="#bfbfbf"/><path d="M670 154H746A61 61 0 0 1 750 277H662V158H670z" stroke="#000"/>
    <path d="M528 160L566 174 581 212 566 250 528 265 490 250 475 212 490 174z" stroke="#000"/></g>
    <path d="M706 396V505H817V660H714V608H606V498z" fill="#aeaeae"/>
    <path d="M62 507H300L222 585 200 610 190 650Q165 672 145 671 110 660 108 635 108 615 115 608H62z" fill="#aeaeae"/>
    <path d="M305 487H500M508 499H700M302 482h8v12h-8zM496 481h12v12h-12zM496 493h12v12h-12zM695 493h11v12h-11z" stroke="#000"/>
    <circle cx="182" cy="597" r="38" fill="#b4b4b4" stroke="#000"/><path d="M150 610Q172 604 188 628 165 637 150 610z" fill="#fff"/>
    <path d="M62 700H164V1000H62z" fill="#fff" stroke="#000"/><path d="M73 700V1000M82 700V1000M62 711H73" stroke="#000"/>
    <path d="M714 600H817V661H714zM400 661L382 680V1000H600V978H714V1128H817V958H400z" fill="#aeaeae"/>
    <path d="M737 545H803V633H737zM737 998H803V1095H737z" fill="#c0c0c0" stroke="#000"/><path d="M734 585v8M734 1042v8" stroke="#000"/>
    <path d="M400 661H817V958H400z" fill="#fff" stroke="#000"/><path d="M744 667H812V952H744z" fill="#c0c0c0"/><path d="M406 667H812V952H406zM664 667L714 950M715 679H794V796H715zM715 823H794V943H715z" stroke="#000"/>
    <path d="M689 1018L698 1015V1128H689z" fill="#e7e7e7" stroke="#000"/><path d="M698 1015L645 1030 600 1070" stroke="#000"/>
  </g>
  <!-- kitchen, closet and toilet -->
  <g transform="translate(326 341) scale(.33333)" stroke-width="3">
    <path d="M238 10L187 62V740H238z" fill="#2e2e2e"/><path d="M241 687H582V717H416V700L400 717H300L320 690H241z" fill="#2f2f2f"/>
    <path d="M1079 231L979 333V740L880 838V1478H978V733H1079z" fill="#aeaeae"/><path d="M978 1480V733H1092" stroke="#000"/>
    <path d="M239 8H361V137H239zM319 143H373V545H319zM319 545H485V685H319z" fill="#fff"/>
    <path d="M239 8H361V137H239M373 180V550H485M319 540H373" stroke="#000"/>
    <path d="M323 147H373V175H323z" fill="#bfbfbf"/>
    <path d="M239 143H319V273H239zM239 273H319V405H239zM239 405H319V540H239zM239 540H319V685H239z" fill="#fff" stroke="#000" stroke-width="5"/><path d="M239 682H319M239 535H319" stroke="#000"/>
    <circle cx="336" cy="210" r="17" stroke="#000"/><circle cx="336" cy="210" r="11" stroke="#000"/><path d="M323 240H361V180M323 180H361" stroke="#000"/>
    <g stroke="#8a8a8a" stroke-dasharray="22 8" shape-rendering="auto"><path d="M320 273H452Q455 220 420 190M320 405H452Q450 300 340 275M320 538H452Q450 430 340 407M485 545V421M485 421Q610 425 614 545M485 455Q395 460 385 550L320 540"/></g>
    <path d="M382 687L485 560V685z" fill="#bfbfbf"/><path d="M391 562H476V667H391z" fill="#fff" stroke="#000"/><path d="M391 667L476 568V667z" fill="#bfbfbf"/><path d="M398 568H470V660H398zM398 568L433 620 470 568M398 660L433 630 470 660M427 618h14v18h-14zM418 670h20" stroke="#000"/><path d="M433 605V675" stroke="#000" stroke-width="6"/>
    <path d="M487 552H616V685H487z" fill="#fff" stroke="#000"/><path d="M485 545H617V555H485z" fill="#000"/><path d="M492 550h5M508 550h5M600 550h8" stroke="#fff"/>
    <path d="M239 685H617M584 687V730M416 687V717M583 730H617" stroke="#000"/><path d="M586 688H615V729H586z" fill="#383838"/>
    <path d="M642 376H822V420H642zM642 228H682V262H642zM862 228H890L862 255zM850 390L905 340H862V376zM590 190L640 225V250L592 275zM590 310L640 260V360L592 390z" fill="#aeaeae"/><path d="M602 205L620 215V240L602 260zM602 320L620 295V350L602 372z" fill="#e7e7e7"/>
    <path d="M683 180H860V376H683z" fill="#fff" stroke="#000"/>
    <path d="M640 180H682V226H640zM640 263H682V340H640zM862 180H903V226H862zM862 263H903V340H862z" fill="#fff" stroke="#000"/><path d="M640 180h9v46h-9zM640 263h9v77h-9zM895 180h9v46h-9zM893 263h12v77h-12z" fill="#000"/><path d="M656 180V226M663 180V226M674 180V226M656 263V340M663 263V340M674 263V340M887 180V226M875 180V226M868 180V226M887 263V340M873 263V340" stroke="#000"/><path d="M637 225H682M862 225H906M637 263H682M862 263H906M637 340H682M862 340H906" stroke="#000" stroke-width="5"/>
    <path d="M363 720H582V732H615L515 834H483V823L461 845H363zM583 900L527 957H583z" fill="#aeaeae"/>
    <path d="M617 730L680 742 735 775 770 828 785 880" stroke="#000"/><path d="M617 885H785V898H617z" fill="#f0f0f0" stroke="#000"/>
    <path d="M583 930H617" stroke="#000"/>
    <path d="M363 993H583V1006H615L515 1110H483V1098H363zM583 1176L483 1278V1412H583z" fill="#aeaeae"/>
    <path d="M415 1006H583V1016H415z" fill="#d0d0d0" stroke="#000"/><path d="M415 1016L430 1075 470 1130 520 1161 583 1174" stroke="#000"/><path d="M583 992V1016" stroke="#000"/>
    <path d="M240 995H361V1216H240z" fill="#fff" stroke="#000"/><path d="M242 997H360V1048H242z" fill="#bfbfbf"/><path d="M243 1021H352V1189H243zM273 1045H330V1165H273zM348 1027L330 1045M348 1184L330 1165" stroke="#000"/><path d="M271 1027H348V1184H271z" stroke="#000"/><path d="M258 1105H295" stroke="#000" stroke-width="7"/><path d="M255 1105H288" stroke="#fff"/><path d="M259 1080v6M259 1126v5M288 1098v14" stroke="#000"/>
    <g><path d="M240 1292Q270 1280 305 1281 358 1285 359 1321 355 1362 295 1361 260 1360 240 1352z" fill="#fff" stroke="#000"/><ellipse cx="312" cy="1321" rx="35" ry="28" stroke="#000"/><path d="M300 1308Q316 1310 317 1321 316 1332 300 1334 290 1321 300 1308z" stroke="#000"/></g>
    <path d="M735 1480L750 1455 815 1410 880 1392" stroke="#000"/><path d="M880 1390H898V1482H880z" fill="#aeaeae" stroke="#000"/><path d="M890 1390V1480" stroke="#000"/>
  </g>
  <!-- bathroom -->
  <g transform="translate(656 391) scale(.33333)" stroke-width="3">
    <path d="M390 0H490V110H464V147H876V480H774V249H363V214L390 188zM268 147H292L268 170zM658 40L726 -26H876V110H774V78H658z" fill="#aeaeae"/>
    <path d="M295 111V145H303V313H295V145" fill="#e7e7e7" stroke="#000"/><path d="M305 313L368 297 420 258 453 205 463 145" stroke="#000"/>
    <path d="M122 67H293V79H122zM285 40L290 67" fill="#f0f0f0" stroke="#000"/>
    <path d="M674 145V481M674 151H845L869 175V450L848 472H674" stroke="#000"/><path d="M772 424h7v5l-3 4-3-4z" stroke="#000" stroke-width="2"/>
    <path d="M266 358H487V481H266z" fill="#fff" stroke="#000"/><path d="M295 367H461V478H295zM301 373H455V450H301zM316 391H437V446H316zM301 373L316 391M455 373L437 391M301 450H455M350 463h10M394 463h10" stroke="#000"/><path d="M378 428V468" stroke="#000" stroke-width="9"/><path d="M378 440V464" stroke="#fff"/><path d="M370 433H387" stroke="#000" stroke-width="5"/>
    <g><path d="M554 481Q543 460 544 430 550 362 585 361 620 362 626 430 626 460 616 481z" fill="#fff" stroke="#000"/><ellipse cx="585" cy="409" rx="29" ry="35" stroke="#000"/><path d="M571 412L585 403 599 412V424H571z" stroke="#000"/></g>
  </g>
  </svg>
  <div class="vscroll d-flex flex-column align-items-center">
    <svg width="9" height="22" fill="none" stroke="currentColor" stroke-width="2"><path d="M1 13l3.500-4L8 13"/></svg>
    <div class="d-flex flex-column justify-content-center flex-grow-1"><div class="thumb-v"></div></div>
    <svg width="9" height="22" fill="none" stroke="currentColor" stroke-width="2"><path d="M1 12l3.500 4L8 12"/></svg>
  </div>
  </div>
  <div class="view-bar d-flex align-items-center">
    <span style="width:50px">1 : 50</span>
    <button class="plain-btn vb-btn" aria-label="Уровень детализации"><svg width="16" height="14"><path d="M.5 1.500h15v11H.5z" fill="#fff" stroke="#444"/><path d="M2 3h4v3H2zM10 3h4v3h-4zM6 6h4v3H6z" fill="#444"/><path d="M2 10.500h12" stroke="#888"/></svg></button>
    <button class="plain-btn vb-btn" aria-label="Визуальный стиль"><svg width="16" height="14" fill="#fff" stroke="#444"><path d="M1.500 5.500h9v7h-9zM1.500 5.500l4-4h9l-4 4M14.500 1.500v7l-4 4"/></svg></button>
    <button class="plain-btn vb-btn" aria-label="Солнце"><svg width="16" height="15"><circle cx="6.500" cy="6.500" r="3.500" fill="#fff3b0" stroke="#c49a1a"/><path d="M6.500 0v2M0 6.500h2M2 2l1 1M11 2l-1 1M2 11l1-1" stroke="#c49a1a"/><path d="M9 8l6 6M15 8l-6 6" stroke="#b8201c" stroke-width="2"/></svg></button>
    <button class="plain-btn vb-btn" aria-label="Тени"><svg width="14" height="14"><ellipse cx="7" cy="12.500" rx="5" ry="1.500" fill="#555"/><circle cx="7" cy="6" r="4.800" fill="#cfe2f7" stroke="#3a6ea8"/></svg></button>
    <button class="plain-btn vb-btn" aria-label="Подрезка вида"><svg width="16" height="14" fill="none"><path d="M0 10.500h4.500v-6H15M4 13.500h1" stroke="#2f62a0" stroke-width="2"/><path d="M7.500 7.500h5v3h-5z" stroke="#b03030"/><path d="M3 4.500V2h9M12.500 5v6H5" stroke="#2f62a0"/></svg></button>
    <button class="plain-btn vb-btn" aria-label="Граница подрезки"><svg width="16" height="14" fill="none"><path d="M0 10.500h3.500v-6H10M4 13h5V8" stroke="#2f62a0" stroke-width="1.500"/><path d="M6 7h2.500v3H6z" stroke="#b03030"/><circle cx="12.500" cy="5" r="2.500" fill="#dce9f7" stroke="#3a6ea8"/><path d="M12.500 8v4" stroke="#3a6ea8" stroke-width="2"/></svg></button>
    <button class="plain-btn vb-btn" aria-label="Временное скрытие"><svg width="16" height="14" fill="none" stroke="#444" stroke-width="1.200"><path d="M0 4l5 4M1 3h3M9 1c4 0 6 2 6 4"/><ellipse cx="7" cy="9" rx="2.800" ry="2"/><ellipse cx="12.500" cy="6.500" rx="2.500" ry="2"/></svg></button>
    <button class="plain-btn vb-btn" aria-label="Показать скрытые"><svg width="12" height="14"><circle cx="6" cy="5.500" r="3" fill="#dce9f7" stroke="#3a6ea8"/><path d="M6 8v5" stroke="#3a6ea8" stroke-width="2"/></svg></button>
    <button class="plain-btn vb-btn" aria-label="Временные свойства"><svg width="16" height="14" fill="none" stroke="#222"><path d="M2.500 2.500h11v9h-11z" stroke-width="1.500" stroke-dasharray="3 1"/><path d="M9.500 7.500h5v5h-5z" fill="#fff" stroke-width="1.500"/><path d="M11 10h2"/></svg></button>
    <button class="plain-btn vb-btn" aria-label="Аналитическая модель"><svg width="17" height="14" fill="none"><path d="M1 12V6l3-3h8M5 12V5M9 12V5M1 8h10" stroke="#444"/><path d="M2 10h9M7 5v8" stroke="#b03030"/><circle cx="13" cy="5" r="3" fill="#ffe89a" stroke="#c49a1a"/><path d="M13 8v4" stroke="#888" stroke-width="2"/></svg></button>
    <button class="plain-btn vb-btn" aria-label="Зависимости"><svg width="17" height="14" fill="none" stroke="#444"><path d="M1 2.500h15M1.500 0v13M15.500 0v5"/><path d="M3 11.500h6" stroke-dasharray="1 1"/><path d="M9 8h7v5H9z" fill="#555"/><path d="M10.500 8V6h4v2"/></svg></button>
    <svg width="7" height="9" class="ms-1" fill="none" stroke="#333" stroke-width="1.500"><path d="M5.500 1L2 4.500 5.500 8"/></svg>
    <div class="d-flex justify-content-center flex-grow-1"><div class="hthumb"></div></div>
    <svg width="16" height="9" class="me-1" fill="none" stroke="#333" stroke-width="1.500"><path d="M1.500 1L5 4.500 1.500 8"/></svg>
    <svg width="9" height="12" class="me-1" fill="#aaa"><path d="M6 0h2v2H6zM6 4h2v2H6zM3 4h2v2H3zM0 8h2v2H0zM3 8h2v2H3zM6 8h2v2H6z"/></svg>
  </div>
</section>

<aside class="browser-pal d-flex flex-column flex-shrink-0">
  <div class="pal-head text-nowrap">Диспетчер проекта - Проект1</div>
  <div class="tree-box flex-grow-1">
  <ul>
    <li><div class="t-row"><button class="t-exp" aria-label="Свернуть"></button><span class="t-dots"></span><svg width="16" height="16" color="#555"><use href="#shaft"/></svg>Виды (все)</div>
      <ul>
        <li><div class="t-row"><button class="t-exp" aria-label="Свернуть"></button><span class="t-dots t-d10"></span>Планы этажей</div>
          <ul>
            <li class="t-row"><span class="t-dots t-d14"></span><span class="t-leaf">1. Обмерный план</span></li>
            <li class="t-row"><span class="t-dots t-d14"></span><span class="t-leaf">2. План возведения</span></li>
            <li class="t-row"><span class="t-dots t-d14"></span><span class="t-leaf t-sel">3. Мебель</span></li>
            <li class="t-row"><span class="t-dots t-d14"></span><span class="t-leaf">Площадка</span></li>
            <li class="t-row"><span class="t-dots t-d14"></span><span class="t-leaf">Уровень 2</span></li>
          </ul></li>
        <li class="t-row"><button class="t-exp plus" aria-label="Развернуть"></button><span class="t-dots t-d10"></span>Планы потолков</li>
        <li class="t-row"><button class="t-exp plus" aria-label="Развернуть"></button><span class="t-dots t-d10"></span>3D виды</li>
        <li class="t-row"><button class="t-exp plus" aria-label="Развернуть"></button><span class="t-dots t-d10"></span>Фасады (Фасад здания)</li>
      </ul></li>
    <li class="t-row"><span class="t-dots t-d12"></span><svg width="16" height="16" color="#555"><use href="#legend"/></svg>Легенды</li>
    <li class="t-row"><span class="t-dots t-d12"></span><svg width="16" height="16" color="#555"><use href="#sched"/></svg>Ведомости/Спецификации</li>
    <li class="t-row"><span class="t-dots t-d12"></span><svg width="16" height="16" color="#555"><use href="#planv"/></svg>Листы (все)</li>
    <li class="t-row"><button class="t-exp plus" aria-label="Развернуть"></button><span class="t-dots"></span><svg width="16" height="16" fill="#eee" stroke="#555"><path d="M1.500 1.500h6v6h-6zM9.500 1.500h5v12h-13v-4h8z"/></svg>Семейства</li>
    <li class="t-row"><button class="t-exp plus" aria-label="Развернуть"></button><span class="t-dots"></span><svg width="16" height="16" fill="none" stroke="#555"><path d="M3 1.500H1.500v13H3M13 1.500h1.500v13H13"/><circle cx="6.500" cy="6.500" r="3"/><path d="M6.500 7.500l3-3 3 2v4l-3 2-3-2z" fill="#bbb"/></svg>Группы</li>
    <li class="t-row"><span class="t-dots t-d12"></span><svg width="16" height="16" fill="none" stroke="#c99a1c" stroke-width="1.800"><rect x="1" y="5.500" width="7" height="5" rx="2.500"/><rect x="8" y="5.500" width="7" height="5" rx="2.500"/><path d="M5 8h6"/></svg>Связанные файлы Revit</li>
  </ul>
  </div>
  <div class="hs-row d-flex align-items-center">
    <svg width="18" height="9" fill="none" stroke="currentColor" stroke-width="1.500"><path d="M11.500 1L8 4.500 11.500 8"/></svg>
    <div class="hs-bar" style="width:150px"></div>
    <svg width="16" height="9" fill="none" stroke="currentColor" stroke-width="2"><path d="M9 1l3.500 3.500L9 8"/></svg>
  </div>
</aside>
</main>

<footer class="status-row d-flex align-items-center">
  <span style="width:758px">Режим ожидания</span>
  <svg class="st-icon" width="16" height="16" fill="currentColor" stroke="#e8e8e8" stroke-width=".5"><path d="M1 7h5v8H1zM10 7h5v8h-5zM5 3l5-2 2 3-2 2v9H6V8L4 6z"/></svg>
  <div class="sel-wrap ms-2"><select class="st-select" aria-label="Рабочий набор"><option></option></select><svg width="9" height="7" fill="none" stroke="#888"><path d="M.5 1l4 4 4-4"/></svg></div>
  <svg class="st-icon ms-2" width="18" height="16" fill="currentColor" stroke="#eee" stroke-width=".6"><path d="M5 1h10v4l-5 2-4 8H1l3-7 3-1z"/></svg>
  <span style="width:34px;padding-left:3px">:0</span>
  <svg class="st-icon" width="16" height="16"><rect width="16" height="16" rx="2" fill="currentColor"/></svg>
  <svg class="st-icon ms-2 me-2" width="20" height="16"><rect x="3" width="15" height="16" fill="currentColor"/><path d="M5 3v6h5l-3-3M8 9l7 5V9" stroke="#eee" fill="none"/></svg>
  <div class="sel-wrap"><select class="st-select" aria-label="Вариант проекта"><option>Главная модель</option></select><svg width="9" height="7" fill="none" stroke="#888"><path d="M.5 1l4 4 4-4"/></svg></div>
  <div class="d-flex align-items-center ms-auto" style="gap:9px;padding-right:94px">
    <svg class="st-icon" width="17" height="16" fill="currentColor"><circle cx="4" cy="4" r="4"/><circle cx="13" cy="4" r="4"/><path d="M5 6h8l-2 9H6z"/></svg>
    <svg class="st-icon" width="17" height="16" fill="currentColor"><path d="M1 14V9l6-4 7-5v16H9v-4H6v4z"/></svg>
    <svg class="st-icon" width="17" height="16" fill="currentColor"><path d="M4 1h7v6l5 3v5h-4v-4H9v4H1v-3l4-4z"/></svg>
    <svg class="st-icon" width="17" height="16" fill="currentColor"><path d="M1 1h8v7l6 4v3H1z"/></svg>
    <svg class="st-icon" width="17" height="16" fill="none" stroke="currentColor" stroke-width="1.500"><path d="M4 1v9M1 3h8M1 6h10M8 1v7l6 6M6 8l6 7"/></svg>
    <svg class="st-icon" width="16" height="16"><circle cx="8" cy="8" r="5" fill="none" stroke="currentColor" stroke-width="3" stroke-dasharray="3 1"/></svg>
    <span class="d-flex align-items-center"><svg width="16" height="16" fill="#f4f4f4" stroke="#555"><path d="M.5 1.500h15L10 8v6l-4 1V8z"/></svg>:0</span>
  </div>
</footer>

<form class="dlg" role="dialog" aria-labelledby="dlgTitle" onsubmit="return false">
  <div class="dlg-head d-flex align-items-center justify-content-between"><span id="dlgTitle">Новый шаблон вида</span><button type="button" class="plain-btn" aria-label="Закрыть" style="padding-right:2px"><svg width="11" height="11"><path d="M.5 .5l10 10M10.500 .5l-10 10" stroke="#222" stroke-width="1.200"/></svg></button></div>
  <div class="dlg-body d-flex align-items-center"><label class="dlg-label" for="tplName">Имя:</label><input class="dlg-input flex-grow-1" id="tplName" type="text" value="5"></div>
  <div class="dlg-foot d-flex justify-content-end"><button class="dlg-btn dlg-ok" type="submit">OK</button><button class="dlg-btn" type="button">Отмена</button></div>
</form>

<div class="halo"></div>
<svg class="pointer" width="13" height="20"><path d="M1 1v15l3.500-3 2.500 6 2.500-1-2.500-6h4.500z" fill="#fff" stroke="#222"/></svg>
<div class="corner-mark"><svg width="22" height="24"><defs><linearGradient id="gold" x1="0" y1="0" x2="0" y2="1"><stop offset=".5" stop-color="#f5cb69"/><stop offset="1" stop-color="#f5cb69" stop-opacity="0"/></linearGradient></defs><path d="M3 2h17v18l-5-4-8 8-5-5 8-10-7-1z" fill="url(#gold)"/></svg></div>
</div>
</body>
</html>
